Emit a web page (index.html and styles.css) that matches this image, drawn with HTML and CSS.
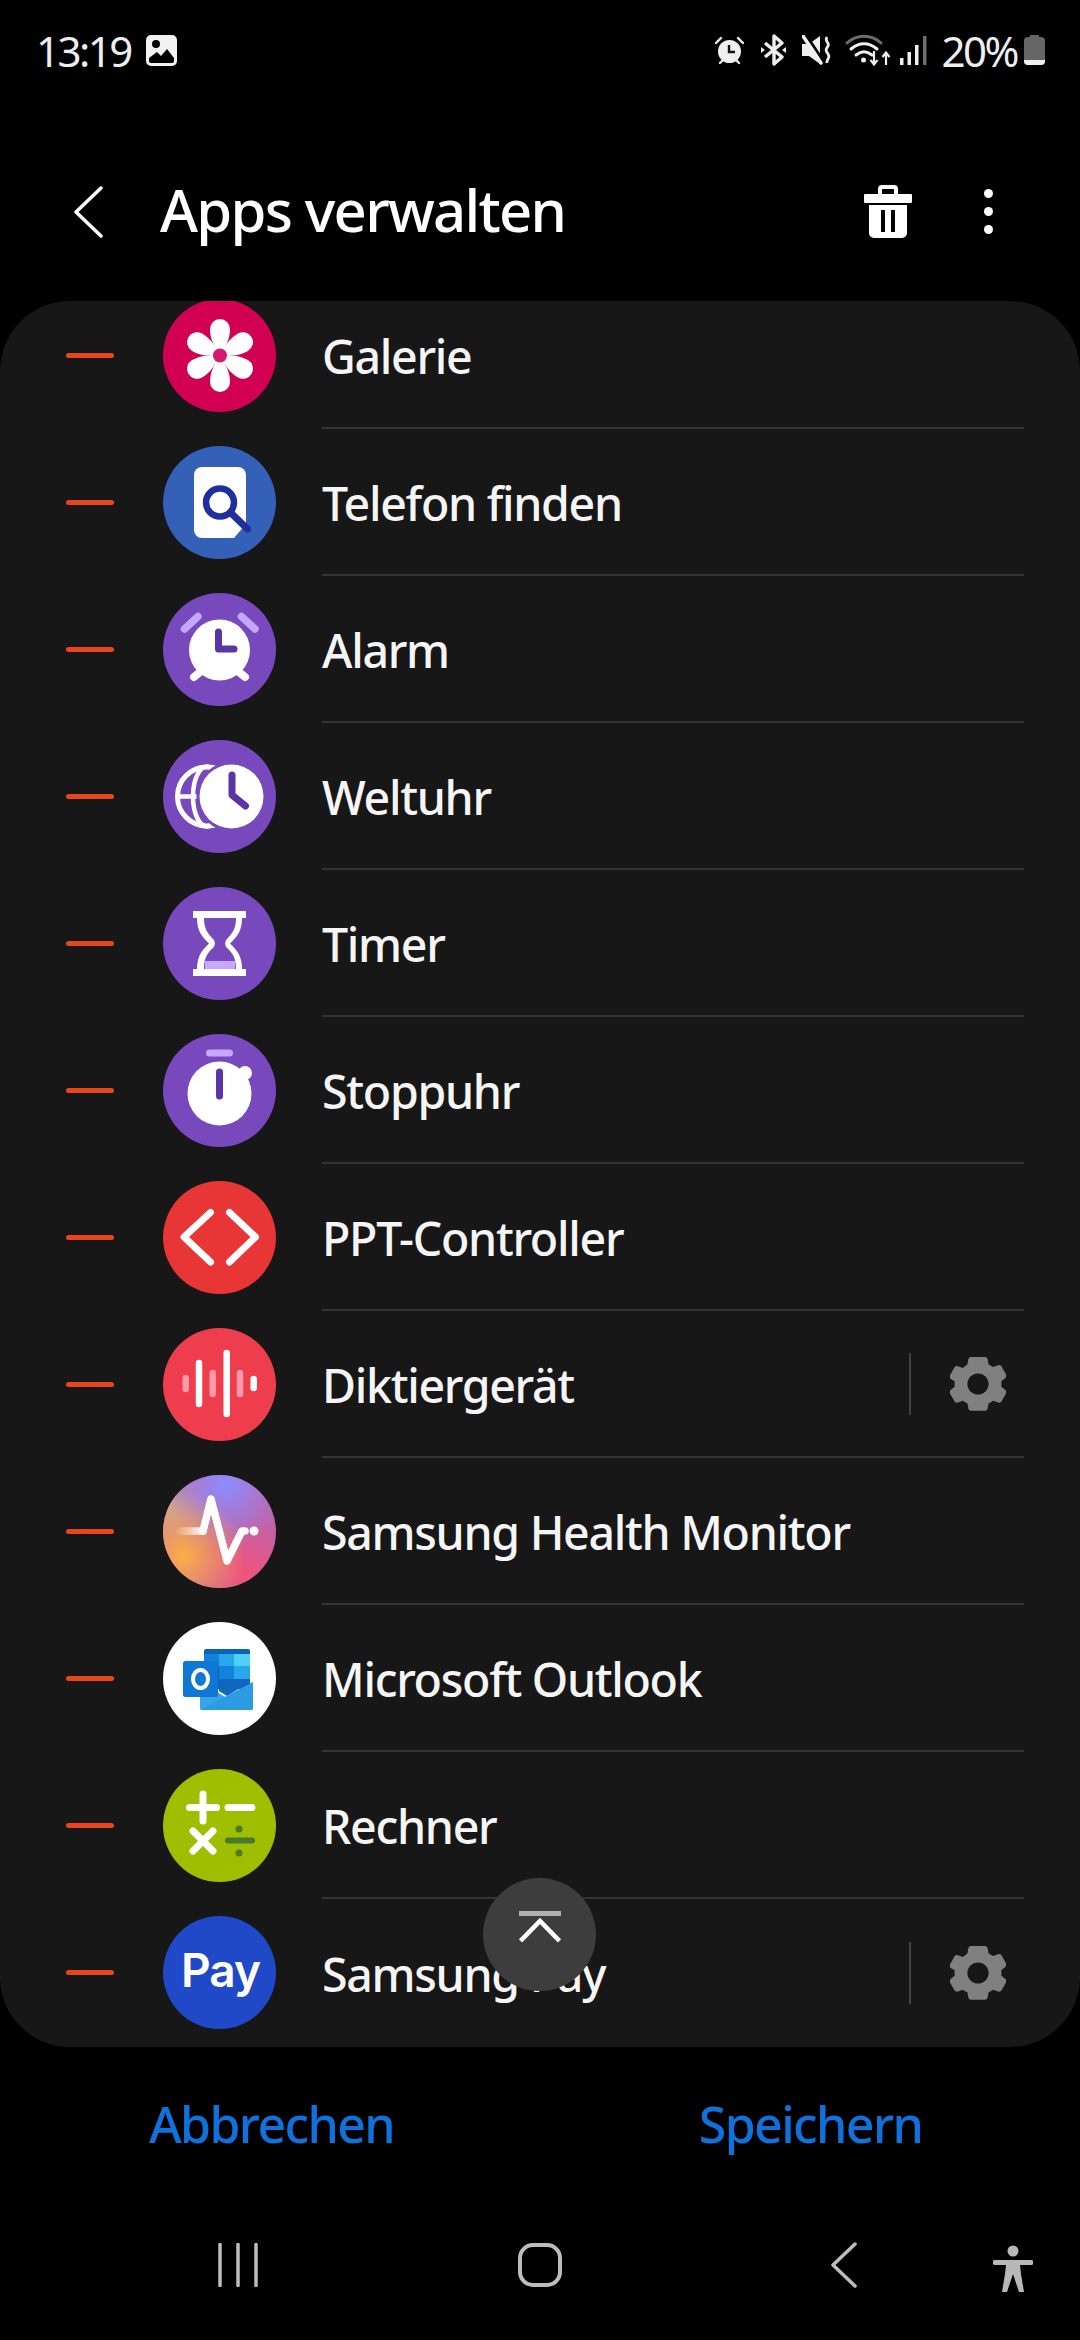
FILE: index.html
```html
<!DOCTYPE html>
<html>

<head>
    <meta charset="utf-8">
    <meta name="viewport" content="width=device-width, initial-scale=1">
    <title>Apps verwalten</title>
    <link rel="stylesheet" href="styles.css">
</head>

<body>
    <svg class="defs" width="0" height="0">
        <symbol id="gear" viewBox="0 0 58 58">
            <path fill-rule="evenodd" fill="#808080" d="M22 1h14a3 3 0 0 1 3 2.4l1 5.4a21 21 0 0 1 4.6 2.7l5.2-1.9a3 3 0 0 1 3.6 1.3l4.6 8a3 3 0 0 1-.7 3.8l-4.2 3.5a21 21 0 0 1 0 5.4l4.2 3.5a3 3 0 0 1 .7 3.8l-4.6 8a3 3 0 0 1-3.6 1.3l-5.2-1.9a21 21 0 0 1-4.6 2.7l-1 5.4a3 3 0 0 1-3 2.4H22a3 3 0 0 1-3-2.4l-1-5.4a21 21 0 0 1-4.6-2.7l-5.2 1.9a3 3 0 0 1-3.6-1.3l-4.6-8a3 3 0 0 1 .7-3.8l4.2-3.5a21 21 0 0 1 0-5.4L.7 23.7a3 3 0 0 1-.7-3.8l4.6-8a3 3 0 0 1 3.6-1.3l5.2 1.9A21 21 0 0 1 18 8.8l1-5.4A3 3 0 0 1 22 1zM29 18a11 11 0 1 0 0 22 11 11 0 0 0 0-22z" />
        </symbol>
        <symbol id="petal" viewBox="0 0 113 113">
            <path d="M57 56C51 47 47 40 47 30a10 10 0 0 1 20 0C67 40 63 47 57 56z" fill="#fff" />
        </symbol>
        <radialGradient id="hPink" cx="0.72" cy="0.88" r="0.5">
            <stop offset="0" stop-color="#f2527a" />
            <stop offset="1" stop-color="#f2527a" stop-opacity="0" />
        </radialGradient>
        <radialGradient id="hOrange" cx="0.18" cy="0.72" r="0.55">
            <stop offset="0" stop-color="#ffae45" />
            <stop offset="1" stop-color="#ffae45" stop-opacity="0" />
        </radialGradient>
        <radialGradient id="hBlue" cx="0.55" cy="0.08" r="0.55">
            <stop offset="0" stop-color="#8c8dff" />
            <stop offset="1" stop-color="#8c8dff" stop-opacity="0" />
        </radialGradient>
        <radialGradient id="hTan" cx="0.05" cy="0.3" r="0.4">
            <stop offset="0" stop-color="#c8a596" />
            <stop offset="1" stop-color="#c8a596" stop-opacity="0" />
        </radialGradient>
        <linearGradient id="hFade" gradientUnits="userSpaceOnUse" x1="15" y1="0" x2="42" y2="0">
            <stop offset="0" stop-color="#fff" stop-opacity="0.1" />
            <stop offset="1" stop-color="#fff" />
        </linearGradient>
    </svg>

    <div class="status">
        <div class="status-left">
            <span class="time">13:19</span>
            <svg width="31" height="31" viewBox="0 0 31 31">
                <path fill-rule="evenodd" fill="#f2f2f2" d="M5 0h21a5 5 0 0 1 5 5v21a5 5 0 0 1-5 5H5a5 5 0 0 1-5-5V5a5 5 0 0 1 5-5zM3 23v3a2 2 0 0 0 2 2h21a2 2 0 0 0 2-2v-3l-7-9-6 7-4-4zM10 5a4 4 0 1 0 0 8 4 4 0 0 0 0-8z" />
            </svg>
        </div>
        <div class="status-right">
            <svg class="st-alarm" width="29" height="29" viewBox="0 0 29 29">
                <circle cx="14.5" cy="15.5" r="11.5" fill="#efefef" />
                <path d="M14 9v7h6" fill="none" stroke="#111" stroke-width="2.4" />
                <path d="M1 7l5-5M28 7l-5-5M5 27l3-3M24 27l-3-3" stroke="#efefef" stroke-width="2.4" stroke-linecap="round" />
            </svg>
            <svg class="st-bt" width="27" height="32" viewBox="0 0 27 32">
                <path d="M5 9l17 14-8 7V2l8 7L5 23" fill="none" stroke="#efefef" stroke-width="3.4" stroke-linejoin="round" />
                <path d="M1 13l4 3-4 3zM26 13l-4 3 4 3z" fill="#efefef" />
            </svg>
            <svg class="st-mute" width="29" height="30" viewBox="0 0 29 30">
                <path d="M0 9h7l11-8v28L7 21H0z" fill="#efefef" />
                <path d="M4 0l18 27" stroke="#000" stroke-width="3" />
                <path d="M1 1l18 27" stroke="#efefef" stroke-width="3.500" stroke-linecap="round" />
                <path d="M25 2c-3 4 3 6 1 9s-3 4 0 8-2 5-1 9" fill="none" stroke="#efefef" stroke-width="2.800" />
            </svg>
            <svg class="st-wifi" width="47" height="33" viewBox="0 0 47 33">
                <path d="M2 9C12 0 26 0 36 9" fill="none" stroke="#6d6d6d" stroke-width="3" stroke-linecap="round" />
                <path d="M6 15c8-7 18-7 26 0M11 21c5-4 11-4 16 0" fill="none" stroke="#efefef" stroke-width="3" stroke-linecap="round" />
                <circle cx="18.500" cy="26" r="2.500" fill="#efefef" />
                <path d="M29 17v13m-3.500-4l3.500 4.500 3.500-4.500M41 31V19m-3.500 4l3.500-4.500 3.500 4.500" fill="none" stroke="#efefef" stroke-width="2.200" />
            </svg>
            <svg class="st-sig" width="27" height="29" viewBox="0 0 27 29">
                <rect x="0" y="22" width="3.500" height="7" fill="#efefef" />
                <rect x="7.500" y="16" width="3.500" height="13" fill="#efefef" />
                <rect x="15" y="9" width="3.500" height="20" fill="#efefef" />
                <rect x="23" y="0" width="3.500" height="29" fill="#6d6d6d" />
            </svg>
            <span class="batt-pct">20%</span>
            <svg class="st-batt" width="21" height="30" viewBox="0 0 21 30">
                <path d="M6 0h9v2h2a4 4 0 0 1 4 4v20a4 4 0 0 1-4 4H4a4 4 0 0 1-4-4V6a4 4 0 0 1 4-4h2z" fill="#666" />
                <path d="M0 25h21v1a4 4 0 0 1-4 4H4a4 4 0 0 1-4-4z" fill="#efefef" />
            </svg>
        </div>
    </div>

    <div class="topbar">
        <svg class="back" width="30" height="52" viewBox="0 0 30 52">
            <path d="M28 2L3 26l25 24" fill="none" stroke="#fff" stroke-width="3.500" stroke-linecap="round" stroke-linejoin="round" />
        </svg>
        <div class="title">Apps verwalten</div>
        <svg class="trash" width="48" height="53" viewBox="0 0 48 53">
            <path d="M16 10V4a2 2 0 0 1 2-2h12a2 2 0 0 1 2 2v6" fill="none" stroke="#fff" stroke-width="4" />
            <rect x="0" y="9" width="48" height="9" rx="1" fill="#fff" />
            <path fill-rule="evenodd" d="M5 20h38v28a5 5 0 0 1-5 5H10a5 5 0 0 1-5-5zM17 25v22h4V25zM27 25v22h4V25z" fill="#fff" />
        </svg>
        <div class="dots"><i></i><i></i><i></i></div>
    </div>

    <div class="card">
        <div class="list">
            <div class="row">
                <span class="minus"></span>
                <svg class="ico" viewBox="0 0 113 113">
                    <circle cx="56.500" cy="56.500" r="56.500" fill="#d20052" />
                    <use href="#petal" width="113" height="113" />
                    <use href="#petal" width="113" height="113" transform="rotate(60 57 56.500)" />
                    <use href="#petal" width="113" height="113" transform="rotate(120 57 56.500)" />
                    <use href="#petal" width="113" height="113" transform="rotate(180 57 56.500)" />
                    <use href="#petal" width="113" height="113" transform="rotate(240 57 56.500)" />
                    <use href="#petal" width="113" height="113" transform="rotate(300 57 56.500)" />
                    <circle cx="57" cy="56.500" r="10" fill="#fff" />
                    <circle cx="57" cy="56.500" r="7" fill="#d5176f" />
                </svg>
                <div class="row-main"><span class="label">Galerie</span></div>
            </div>
            <div class="row">
                <span class="minus"></span>
                <svg class="ico" viewBox="0 0 113 113">
                    <circle cx="56.500" cy="56.500" r="56.500" fill="#3560b8" />
                    <rect x="31" y="21" width="52" height="71" rx="8" fill="#fff" />
                    <path d="M83 78l-12 14h12z" fill="#3560b8" />
                    <circle cx="57" cy="56.500" r="14" fill="none" stroke="#1f2f9e" stroke-width="6.500" />
                    <path d="M69 68l15.500 15" stroke="#1f2f9e" stroke-width="7" stroke-linecap="round" />
                </svg>
                <div class="row-main"><span class="label">Telefon finden</span></div>
            </div>
            <div class="row">
                <span class="minus"></span>
                <svg class="ico" viewBox="0 0 113 113">
                    <circle cx="56.500" cy="56.500" r="56.500" fill="#7849bd" />
                    <path d="M21.500 36L35 23.500M78.500 23.500L92 36" stroke="#c4a8ff" stroke-width="7.500" stroke-linecap="round" />
                    <path d="M31 84l6-5M82 84l-6-5" stroke="#fff" stroke-width="8" stroke-linecap="round" />
                    <circle cx="56.500" cy="57" r="30.500" fill="#fff" />
                    <path d="M55.500 39v17h15.500" fill="none" stroke="#5a35a5" stroke-width="7" stroke-linecap="round" stroke-linejoin="round" />
                </svg>
                <div class="row-main"><span class="label">Alarm</span></div>
            </div>
            <div class="row">
                <span class="minus"></span>
                <svg class="ico" viewBox="0 0 113 113">
                    <circle cx="56.500" cy="56.500" r="56.500" fill="#7849bd" />
                    <circle cx="44" cy="56.500" r="29.500" fill="none" stroke="#fff" stroke-width="5" />
                    <ellipse cx="44" cy="56.500" rx="14" ry="30" fill="none" stroke="#fff" stroke-width="4.500" />
                    <path d="M14 56.500h40" stroke="#fff" stroke-width="4.500" />
                    <circle cx="68.500" cy="56.500" r="35" fill="#7849bd" />
                    <circle cx="68.500" cy="56.500" r="32" fill="#fff" />
                    <path d="M69 35v20l13.500 11" fill="none" stroke="#5a35a5" stroke-width="7" stroke-linecap="round" stroke-linejoin="round" />
                </svg>
                <div class="row-main"><span class="label">Weltuhr</span></div>
            </div>
            <div class="row">
                <span class="minus"></span>
                <svg class="ico" viewBox="0 0 113 113">
                    <circle cx="56.500" cy="56.500" r="56.500" fill="#7849bd" />
                    <rect x="42" y="74" width="30" height="9" fill="#c6a8ff" />
                    <path d="M30 24h53v7h-4c0 12-4 18-12 25.500 8 7.500 12 13.500 12 25.500h4v7H30v-7h4c0-12 4-18 12-25.500-8-7.500-12-13.500-12-25.500h-4zM41 31c0 10 3 15 10 22l1 3.500-1 3.500c-7 6-10 11-10 22h32c0-11-3-16-10-22l-1-3.500 1-3.500c7-7 10-12 10-22z" fill="#fff" />
                </svg>
                <div class="row-main"><span class="label">Timer</span></div>
            </div>
            <div class="row">
                <span class="minus"></span>
                <svg class="ico" viewBox="0 0 113 113">
                    <circle cx="56.500" cy="56.500" r="56.500" fill="#7849bd" />
                    <rect x="43" y="15.500" width="27" height="7" rx="3.500" fill="#c8a8ff" />
                    <circle cx="82" cy="39" r="7" fill="#fff" />
                    <circle cx="56.500" cy="59.500" r="32" fill="#fff" />
                    <path d="M56.500 38v24" stroke="#5a35a5" stroke-width="7" stroke-linecap="round" />
                </svg>
                <div class="row-main"><span class="label">Stoppuhr</span></div>
            </div>
            <div class="row">
                <span class="minus"></span>
                <svg class="ico" viewBox="0 0 113 113">
                    <circle cx="56.500" cy="56.500" r="56.500" fill="#e83535" />
                    <path d="M47.500 31.500L21 56l26.500 25M66.500 31.500L92.500 56 66.500 81" fill="none" stroke="#fff" stroke-width="7" stroke-linecap="round" stroke-linejoin="round" />
                </svg>
                <div class="row-main"><span class="label">PPT-Controller</span></div>
            </div>
            <div class="row">
                <span class="minus"></span>
                <svg class="ico" viewBox="0 0 113 113">
                    <circle cx="56.500" cy="56.500" r="56.500" fill="#ee3e4d" />
                    <g stroke-width="6.500" stroke-linecap="round">
                        <path d="M22.700 50v11M49.700 45v21M77 45v21" stroke="#ff9aa8" />
                        <path d="M36 35v41M63.700 25v61M90.700 51v9" stroke="#fff" />
                    </g>
                </svg>
                <div class="row-main">
                    <span class="label">Diktiergerät</span>
                    <span class="vline"></span>
                    <svg class="gear"><use href="#gear" /></svg>
                </div>
            </div>
            <div class="row">
                <span class="minus"></span>
                <svg class="ico" viewBox="0 0 113 113">
                    <circle cx="56.500" cy="56.500" r="56.500" fill="#c063a8" />
                    <circle cx="56.500" cy="56.500" r="56.500" fill="url(#hPink)" />
                    <circle cx="56.500" cy="56.500" r="56.500" fill="url(#hTan)" />
                    <circle cx="56.500" cy="56.500" r="56.500" fill="url(#hBlue)" />
                    <circle cx="56.500" cy="56.500" r="56.500" fill="url(#hOrange)" />
                    <path d="M17 56h23" fill="none" stroke="url(#hFade)" stroke-width="7.500" stroke-linecap="round" />
                    <path d="M40 56l8-32 16 62 15-30h3" fill="none" stroke="#fff" stroke-width="7.500" stroke-linecap="round" stroke-linejoin="round" />
                    <circle cx="91" cy="56" r="4.500" fill="#fff" />
                </svg>
                <div class="row-main"><span class="label">Samsung Health Monitor</span></div>
            </div>
            <div class="row">
                <span class="minus"></span>
                <svg class="ico" viewBox="0 0 113 113">
                    <circle cx="56.500" cy="56.500" r="56.500" fill="#fff" />
                    <rect x="41" y="27" width="46" height="40" rx="2" fill="#0a64b8" />
                    <rect x="41" y="32" width="15" height="12" fill="#1283d8" />
                    <rect x="56" y="32" width="15" height="12" fill="#2aa6ea" />
                    <rect x="71" y="32" width="16" height="12" fill="#50d0f8" />
                    <rect x="41" y="44" width="15" height="13" fill="#0a64b8" />
                    <rect x="56" y="44" width="15" height="13" fill="#1283d8" />
                    <rect x="71" y="44" width="16" height="13" fill="#2aa6ea" />
                    <path d="M37 60l27 16 26-16v26a2 2 0 0 1-2 2H39a2 2 0 0 1-2-2z" fill="#35a6e8" />
                    <path d="M56 57h31v3L64 74 56 69z" fill="#0f68bd" />
                    <path d="M37 88l53-28v26a2 2 0 0 1-2 2z" fill="#2b9be2" />
                    <rect x="20" y="39" width="35" height="36" rx="2.500" fill="#0f77d4" />
                    <ellipse cx="37.500" cy="57" rx="7.500" ry="9" fill="none" stroke="#fff" stroke-width="4" />
                </svg>
                <div class="row-main"><span class="label">Microsoft Outlook</span></div>
            </div>
            <div class="row">
                <span class="minus"></span>
                <svg class="ico" viewBox="0 0 113 113">
                    <circle cx="56.500" cy="56.500" r="56.500" fill="#9fbe00" />
                    <path d="M26.500 38.500h27M40 25v27M65 38.500h24M30 62l20 20M50 62L30 82" stroke="#fff" stroke-width="7" stroke-linecap="round" />
                    <path d="M65 71.500h24" stroke="#4a7a2d" stroke-width="6" stroke-linecap="round" />
                    <circle cx="76" cy="60" r="3.500" fill="#4a7a2d" />
                    <circle cx="76" cy="84" r="3.500" fill="#4a7a2d" />
                </svg>
                <div class="row-main"><span class="label">Rechner</span></div>
            </div>
            <div class="row">
                <span class="minus"></span>
                <svg class="ico" viewBox="0 0 113 113">
                    <circle cx="56.500" cy="56.500" r="56.500" fill="#2049c7" />
                    <text class="pay" x="18" y="71" textLength="80">Pay</text>
                </svg>
                <div class="row-main">
                    <span class="label">Samsung Pay</span>
                    <span class="vline"></span>
                    <svg class="gear"><use href="#gear" /></svg>
                </div>
            </div>
        </div>
        <div class="to-top">
            <svg width="42" height="32" viewBox="0 0 42 32">
                <rect x="0" y="0" width="42" height="5" fill="#b0b0b0" />
                <path d="M1.500 30L21 10l19.500 20" fill="none" stroke="#fff" stroke-width="4.500" />
            </svg>
        </div>
    </div>

    <div class="actions">
        <div class="action">Abbrechen</div>
        <div class="action">Speichern</div>
    </div>

    <div class="nav">
        <svg class="nav-recent" width="40" height="44" viewBox="0 0 40 44">
            <path d="M2 1.500v41M20 1.500v41M38 1.500v41" stroke="#bdbdbd" stroke-width="3.500" stroke-linecap="round" />
        </svg>
        <svg class="nav-home" width="44" height="44" viewBox="0 0 44 44">
            <rect x="2" y="2" width="40" height="40" rx="13" fill="none" stroke="#bdbdbd" stroke-width="4" />
        </svg>
        <svg class="nav-back" width="26" height="46" viewBox="0 0 26 46">
            <path d="M24 2L2 23l22 21" fill="none" stroke="#bdbdbd" stroke-width="3.500" stroke-linecap="round" stroke-linejoin="round" />
        </svg>
        <svg class="nav-a11y" width="40" height="48" viewBox="0 0 40 48">
            <circle cx="20" cy="6" r="5.500" fill="#b8b8b8" />
            <path d="M2 15h36a1.500 1.500 0 0 1 0 5H27l1 9 3 18h-5l-6-18-6 18H9l3-18 1-9H2a1.500 1.500 0 0 1 0-5z" fill="#b8b8b8" />
        </svg>
    </div>
</body>

</html>
```

FILE: styles.css
```css
* {
    margin: 0;
    padding: 0;
    box-sizing: border-box;
}

html,
body {
    width: 1080px;
    height: 2340px;
    overflow: hidden;
}

body {
    display: flex;
    flex-direction: column;
    background: #000000;
    color: #f5f5f5;
    font-family: "Noto Sans", Roboto, sans-serif;
}

.defs {
    position: absolute;
}

.status {
    height: 100px;
    flex: none;
    display: flex;
    align-items: center;
    justify-content: space-between;
    padding: 0 35px 0 36px;
}

.status-left,
.status-right {
    display: flex;
    align-items: center;
}

.time {
    font-size: 42px;
    letter-spacing: -2.500px;
    margin-right: 15px;
    color: #eeeeee;
}

.st-alarm {
    margin-right: 16px;
}

.st-bt {
    margin-right: 15px;
}

.st-mute {
    margin-right: 14px;
}

.st-wifi {
    margin-right: 8px;
}

.st-sig {
    margin-right: 15px;
}

.batt-pct {
    font-size: 42px;
    letter-spacing: -2.500px;
    margin-right: 7px;
    color: #eeeeee;
}

.topbar {
    height: 201px;
    flex: none;
    display: flex;
    align-items: center;
    padding: 22px 0 0 73px;
}

.back {
    flex: none;
}

.title {
    margin: 0 0 5px 57px;
    font-size: 58px;
    font-weight: 500;
    letter-spacing: -1.700px;
    color: #ffffff;
}

.trash {
    margin-left: auto;
}

.dots {
    width: 9px;
    margin: 0 87px 0 72px;
    display: flex;
    flex-direction: column;
    gap: 9px;
}

.dots i {
    width: 9px;
    height: 9px;
    border-radius: 50%;
    background: #ffffff;
}

.card {
    position: relative;
    height: 1746px;
    flex: none;
    overflow: hidden;
    background: #171717;
    border-radius: 70px;
}

.list {
    margin-top: -19px;
}

.row {
    height: 147px;
    display: flex;
    align-items: center;
    padding-left: 66px;
}

.minus {
    width: 48px;
    height: 5px;
    flex: none;
    border-radius: 3px;
    background: #e8451a;
}

.ico {
    width: 113px;
    height: 113px;
    flex: none;
    margin: 0 46px 0 49px;
}

.pay {
    font-family: Inter, sans-serif;
    font-size: 46px;
    font-weight: 600;
    fill: #ffffff;
}

.row-main {
    flex: 1;
    height: 100%;
    margin-right: 56px;
    display: flex;
    align-items: center;
    border-bottom: 2px solid #333333;
}

.row:last-child .row-main {
    border-bottom: none;
}

.label {
    padding-top: 2px;
    font-size: 46.500px;
    font-weight: 500;
    letter-spacing: -1.300px;
    color: #f5f5f5;
}

.vline {
    width: 2px;
    height: 62px;
    margin-left: auto;
    background: #444444;
}

.gear {
    width: 56px;
    height: 56px;
    margin: 0 18px 0 39px;
}

.to-top {
    position: absolute;
    left: 483px;
    top: 1577px;
    width: 113px;
    height: 113px;
    display: flex;
    align-items: center;
    justify-content: center;
    border-radius: 50%;
    background: #3d3d3d;
}

.to-top svg {
    margin-bottom: 16px;
}

.actions {
    height: 154px;
    flex: none;
    display: flex;
    align-items: center;
    padding-left: 2px;
}

.action {
    flex: 1;
    text-align: center;
    font-size: 50px;
    font-weight: 500;
    letter-spacing: -1.600px;
    color: #0f72dc;
}

.nav {
    flex: 1;
    display: flex;
    align-items: center;
    padding: 0 0 12px 0;
}

.nav-recent {
    margin-left: 218px;
}

.nav-home {
    margin-left: 260px;
}

.nav-back {
    margin-left: 269px;
}

.nav-a11y {
    margin-left: 136px;
    margin-top: 8px;
}
```
